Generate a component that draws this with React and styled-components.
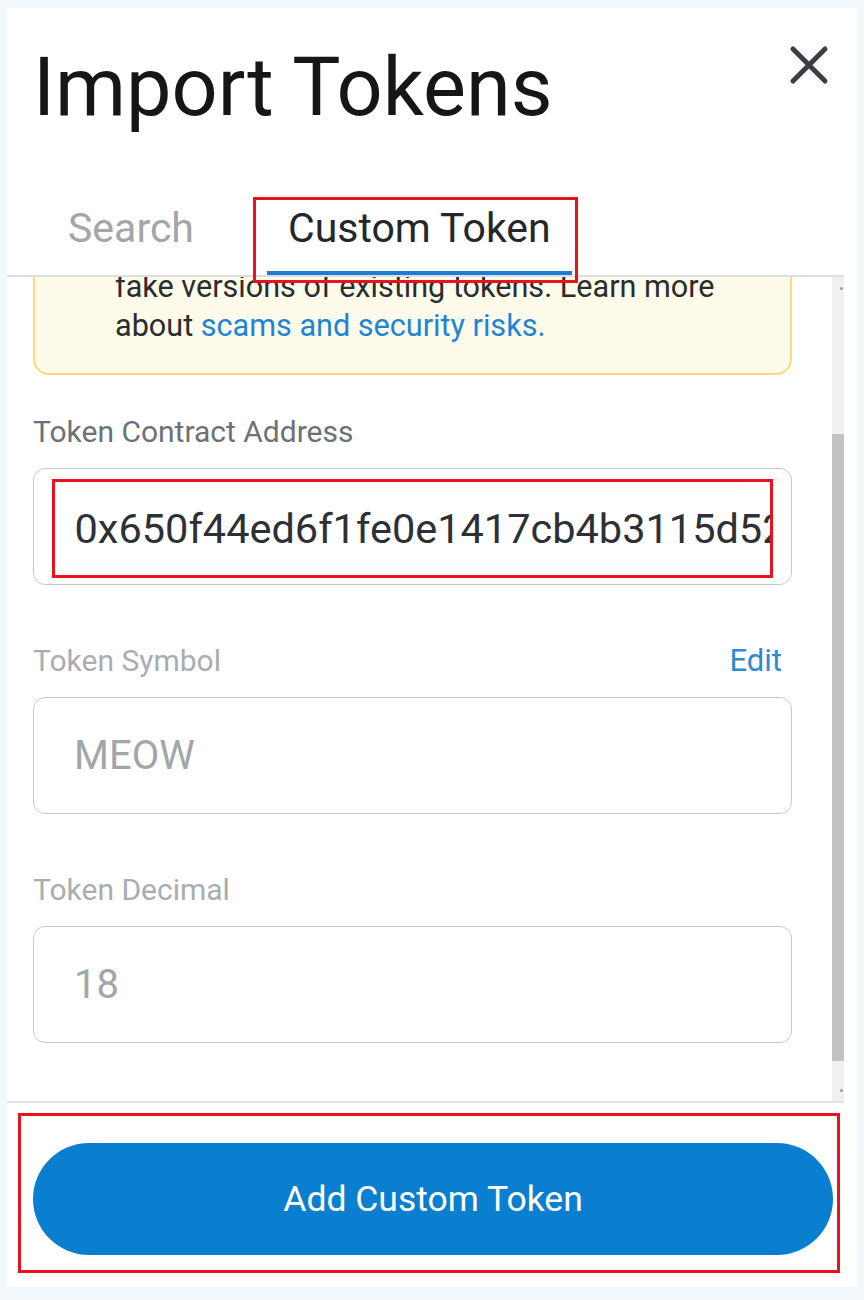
import { useLayoutEffect, useRef, useState } from "react";
import styled, { createGlobalStyle } from "styled-components";

const GlobalStyle = createGlobalStyle`
    body {
        margin: 0;
        background: #f3f8fd;
        font-family: Roboto, "Liberation Sans", sans-serif;
    }
    * { box-sizing: border-box; }
`

const Page = styled.div`
    padding: 8px 7px 13px 7px;
`
const Panel = styled.div`
    width: 850px;
    background: #ffffff;
    padding-right: 13px;
    display: flex;
    flex-direction: column;
`
const Header = styled.header`
    display: flex;
    justify-content: space-between;
    align-items: flex-start;
    padding: 40px 13px 0 26px;
`
const Title = styled.h1`
    margin: 0;
    font-size: 81px;
    line-height: 80px;
    font-weight: 400;
    color: #141618;
`
const CloseButton = styled.button`
    margin-top: -5px;
    width: 44px;
    height: 44px;
    padding: 0;
    border: none;
    background: none;
    display: flex;
`
const TabList = styled.div`
    position: relative;
    z-index: 2;
    display: flex;
    gap: 52px;
    margin-top: 76px;
    padding-left: 40px;
    border-bottom: 2px solid #dcdee0;
`
const Tab = styled.div`
    position: relative;
    padding: 0 21px 19px;
    font-size: 41px;
    line-height: 48px;
    color: ${p => (p.$active ? "#24272a" : "#a2a6aa")};
    border-bottom: 4px solid ${p => (p.$active ? "#1a7fd4" : "transparent")};
    ${p => p.$marked && `
        &::after {
            content: "";
            position: absolute;
            top: -7px;
            left: -14px;
            right: -6px;
            bottom: -12px;
            border: 3px solid #e8131c;
        }
    `}
`
const ScrollFrame = styled.div`
    height: 824px;
    display: flex;
`
const ScrollArea = styled.div`
    flex: 1;
    overflow-y: scroll;
    scrollbar-width: none;
    &::-webkit-scrollbar {
        display: none;
    }
`
const Track = styled.div`
    width: 12px;
    flex: none;
    display: flex;
    flex-direction: column;
    background: #f0f0f0;
`
const ArrowButton = styled.div`
    height: 22px;
    flex: none;
    display: flex;
    align-items: center;
    justify-content: flex-end;
    padding-right: 1px;
    &::before {
        content: "";
        width: 3px;
        height: 3px;
        border-radius: 50%;
        background: #9a9a9a;
    }
`
const Rail = styled.div`
    flex: 1;
    position: relative;
`
const Thumb = styled.div`
    position: absolute;
    left: 0;
    right: 0;
    background: #c2c2c2;
`
const ScrollBody = styled.div`
    padding: 105px 40px 82px 26px;
    display: flex;
    flex-direction: column;
`
const Warning = styled.div`
    display: flex;
    gap: 28px;
    padding: 22px 20px 28px 24px;
    background: #fefbea;
    border: 2px solid #fdd97a;
    border-radius: 16px;
    font-size: 30.6px;
    line-height: 39px;
    color: #2a2d30;
    margin-bottom: 39px;
`
const WarningIcon = styled.svg`
    flex: none;
    margin-top: 6px;
`
const Link = styled.a`
    color: #1c85d6;
    text-decoration: none;
`
const FieldGroup = styled.div`
    display: flex;
    flex-direction: column;
    & + & {
        margin-top: 58px;
    }
`
const LabelRow = styled.div`
    display: flex;
    justify-content: space-between;
    margin-bottom: 18px;
    padding-right: 10px;
`
const Label = styled.label`
    font-size: 30px;
    line-height: 36px;
    color: ${p => (p.$muted ? "#a9adb1" : "#6c7176")};
`
const EditLink = styled.span`
    font-size: 31px;
    line-height: 36px;
    color: #2f8ad6;
`
const Field = styled.div`
    height: 117px;
    border: 1.5px solid #c6c9cc;
    border-radius: 12px;
    display: flex;
    padding: ${p => (p.$marked ? "10px 18.5px 6.5px 17.5px" : "0 0 0 40px")};
`
const Marker = styled.div`
    flex: 1;
    display: flex;
    border: 3px solid #e8131c;
    padding-left: 20px;
    overflow: hidden;
`
const Input = styled.input`
    flex: 1;
    min-width: 0;
    border: none;
    outline: none;
    background: transparent;
    padding: 0;
    font-family: Roboto, "Liberation Sans", sans-serif;
    font-size: ${p => p.$size || 40}px;
    color: ${p => p.$color};
`
const Footer = styled.footer`
    border-top: 2px solid #e2e3e5;
    padding: 10px 4px 14px 11px;
`
const ButtonMarker = styled.div`
    border: 3px solid #e8131c;
    padding: 27px 4px 15px 12px;
`
const PrimaryButton = styled.button`
    width: 100%;
    height: 112px;
    border: none;
    border-radius: 56px;
    background: #0a7fd0;
    color: #ffffff;
    font-family: Roboto, "Liberation Sans", sans-serif;
    font-size: 35.5px;
`

const address = "0x650f44ed6f1fe0e1417cb4b3115d52a8e8c2c0d1"

export default function App() {
    const scrollRef = useRef(null)
    const railRef = useRef(null)
    const [thumb, setThumb] = useState({ top: 0, height: 0 })

    useLayoutEffect(() => {
        const el = scrollRef.current
        const rail = railRef.current
        if (!el || !rail) return
        el.scrollTop = el.scrollHeight - el.clientHeight - 24
        const railH = rail.clientHeight
        const height = (el.clientHeight / el.scrollHeight) * railH
        const max = el.scrollHeight - el.clientHeight
        const top = max > 0 ? (el.scrollTop / max) * (railH - height) : 0
        setThumb({ top, height })
    }, [])

    return (
        <>
            <GlobalStyle />
            <Page>
                <Panel>
                    <Header>
                        <Title>Import Tokens</Title>
                        <CloseButton aria-label="Close">
                            <svg width="44" height="44" viewBox="0 0 44 44">
                                <path d="M6 6 L38 38 M38 6 L6 38" stroke="#3b3f44" strokeWidth="5" strokeLinecap="round" />
                            </svg>
                        </CloseButton>
                    </Header>
                    <TabList>
                        <Tab>Search</Tab>
                        <Tab $active $marked>Custom Token</Tab>
                    </TabList>
                    <ScrollFrame>
                        <ScrollArea ref={scrollRef}>
                            <ScrollBody>
                                <Warning>
                                    <WarningIcon width="28" height="28" viewBox="0 0 24 24">
                                        <circle cx="12" cy="12" r="10" fill="none" stroke="#f8c000" strokeWidth="2" />
                                        <path d="M12 11v6 M12 7.5v.5" stroke="#f8c000" strokeWidth="2.4" strokeLinecap="round" />
                                    </WarningIcon>
                                    <div>
                                        Anyone can create a token, including creating fake versions of existing tokens. Learn more about{" "}
                                        <Link>scams and security risks.</Link>
                                    </div>
                                </Warning>
                                <FieldGroup>
                                    <LabelRow>
                                        <Label>Token Contract Address</Label>
                                    </LabelRow>
                                    <Field $marked>
                                        <Marker>
                                            <Input readOnly value={address} $size={41.5} $color="#2d3034" />
                                        </Marker>
                                    </Field>
                                </FieldGroup>
                                <FieldGroup>
                                    <LabelRow>
                                        <Label $muted>Token Symbol</Label>
                                        <EditLink>Edit</EditLink>
                                    </LabelRow>
                                    <Field>
                                        <Input readOnly value="MEOW" $color="#a3a6a9" />
                                    </Field>
                                </FieldGroup>
                                <FieldGroup>
                                    <LabelRow>
                                        <Label $muted>Token Decimal</Label>
                                    </LabelRow>
                                    <Field>
                                        <Input readOnly value="18" $color="#a3a6a9" />
                                    </Field>
                                </FieldGroup>
                            </ScrollBody>
                        </ScrollArea>
                        <Track>
                            <ArrowButton />
                            <Rail ref={railRef}>
                                <Thumb style={{ top: thumb.top, height: thumb.height }} />
                            </Rail>
                            <ArrowButton />
                        </Track>
                    </ScrollFrame>
                    <Footer>
                        <ButtonMarker>
                            <PrimaryButton>Add Custom Token</PrimaryButton>
                        </ButtonMarker>
                    </Footer>
                </Panel>
            </Page>
        </>
    )
}
